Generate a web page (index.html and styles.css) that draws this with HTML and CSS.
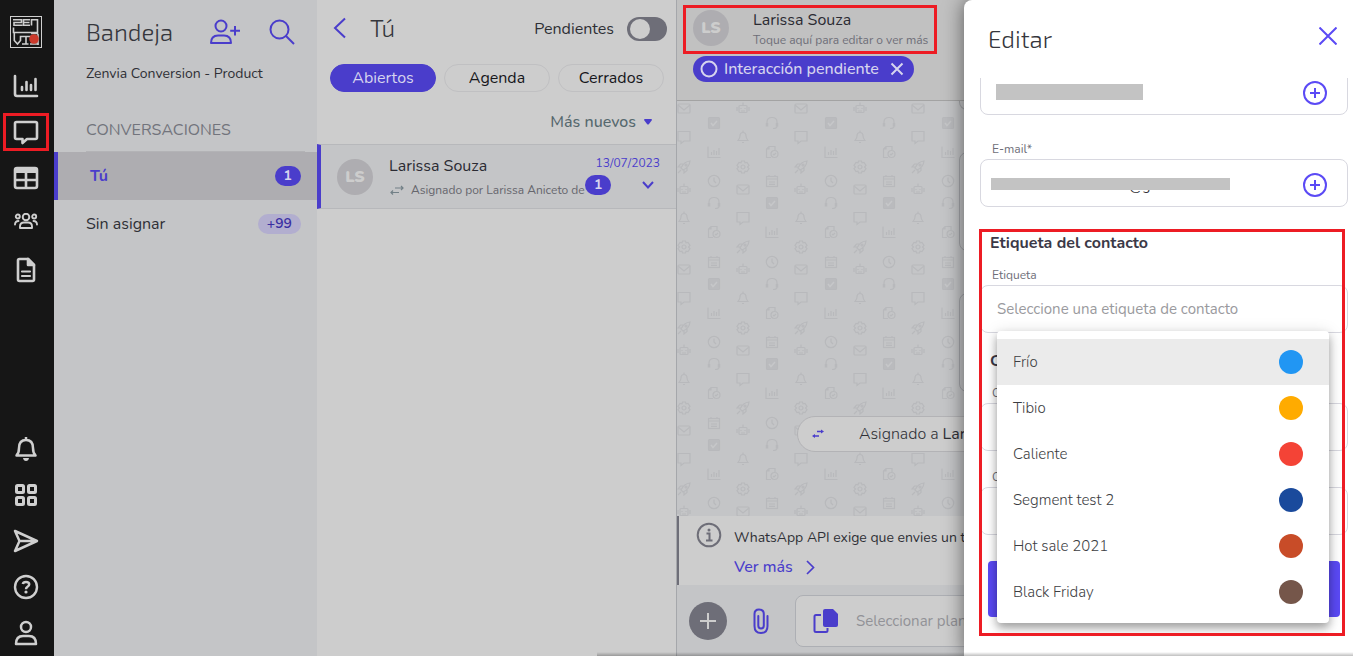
FILE: index.html
```html
<!DOCTYPE html>
<html lang="es">
<head>
    <meta charset="UTF-8">
    <meta name="viewport" content="width=device-width, initial-scale=1.0">
    <title>Bandeja</title>
    <link rel="stylesheet" href="styles.css">
</head>
<body>

<div class="app">
    <!-- Main navigation -->
    <nav class="rail">
        <a class="logo" href="#" aria-label="Zenvia">
            <svg width="32" height="32" viewBox="0 0 32 32" fill="none" stroke="#cfcfcf" stroke-width="1.6">
                <rect x=".5" y=".5" width="31" height="31" stroke-width="1"/>
                <path d="M3 3.8H11.5V6.5H4V9.2H12.5M20 3.8H13.5V9.2H20M14 6.5H19.5M21.5 9.5V3.8H27.5V17.5H21M28 18V29"/>
                <path d="M3.500 11.500V16.500H27M4.300 17V24.500L7.500 28L10.500 24.500V20.500H21M12 28H18.500M16 21V28M20 28H28.500M10.500 20V24"/>
                <circle cx="24" cy="23" r="4.800" fill="#cb3a2c" stroke="none"/>
            </svg>
        </a>
        <a class="rail-item" href="#" aria-label="Informes">
            <svg width="26" height="24" viewBox="0 0 26 24" fill="none" stroke="#cfcfcf" stroke-width="2.6" stroke-linecap="round"><path d="M2 2V20Q2 22 4 22H24M9 13V16M13.5 8V16M18 11V16M22.5 5V16"/></svg>
        </a>
        <a class="rail-item" href="#" aria-label="Conversaciones">
            <span class="rail-highlight">
                <svg width="26" height="26" viewBox="0 0 26 26" fill="none" stroke="#cfcfcf" stroke-width="2.6" stroke-linejoin="round"><path d="M3.5 3H22.5Q24 3 24 4.500V18.500Q24 20 22.500 20H14L9.500 24V20H3.500Q2 20 2 18.500V4.500Q2 3 3.500 3Z"/></svg>
            </span>
        </a>
        <a class="rail-item" href="#" aria-label="Tablas">
            <svg width="26" height="24" viewBox="0 0 26 24" fill="none" stroke="#cfcfcf" stroke-width="2.6"><rect x="2" y="2" width="22" height="20" rx="2"/><path d="M2 4.500H24" stroke-width="5"/><path d="M2 14H24M13 5V22"/></svg>
        </a>
        <a class="rail-item" href="#" aria-label="Contactos">
            <svg width="24" height="22" viewBox="0 0 24 22" fill="none" stroke="#cfcfcf" stroke-width="1.900" stroke-linecap="round" stroke-linejoin="round"><circle cx="12" cy="4" r="3.300"/><circle cx="3.800" cy="3.500" r="2"/><circle cx="20.200" cy="3.500" r="2"/><path d="M6 15V13.500Q6 9.500 10 9.500H14Q18 9.500 18 13.500V15ZM1 11.500Q1 8 4.500 8M23 11.500Q23 8 19.500 8"/></svg>
        </a>
        <a class="rail-item" href="#" aria-label="Documentos">
            <svg width="20" height="26" viewBox="0 0 20 26" fill="none" stroke="#cfcfcf" stroke-width="2.600" stroke-linejoin="round"><path d="M3.500 2H12L18 8V22.500Q18 24 16.500 24H3.500Q2 24 2 22.500V3.500Q2 2 3.500 2Z"/><path d="M12 2V8H18Z" fill="#cfcfcf"/><path d="M6 14.500H14M6 19H14" stroke-linecap="round" stroke-width="2.200"/></svg>
        </a>
        <span class="rail-space"></span>
        <a class="rail-item" href="#" aria-label="Notificaciones">
            <svg width="24" height="26" viewBox="0 0 24 26" fill="none" stroke="#cfcfcf" stroke-width="2.500" stroke-linejoin="round"><path d="M2.500 19.500Q5 17 5 12Q5 4 12 4Q19 4 19 12Q19 17 21.500 19.500ZM12 1V4"/><path d="M9 22H15Q14.500 25 12 25Q9.500 25 9 22Z" fill="#cfcfcf" stroke="none"/></svg>
        </a>
        <a class="rail-item" href="#" aria-label="Aplicaciones">
            <svg width="24" height="24" viewBox="0 0 24 24" fill="none" stroke="#cfcfcf" stroke-width="3"><rect x="2.500" y="2.500" width="7" height="7" rx="1"/><rect x="14.500" y="2.500" width="7" height="7" rx="1"/><rect x="2.500" y="14.500" width="7" height="7" rx="1"/><rect x="14.500" y="14.500" width="7" height="7" rx="1"/></svg>
        </a>
        <a class="rail-item" href="#" aria-label="Enviar">
            <svg width="26" height="24" viewBox="0 0 26 24" fill="none" stroke="#cfcfcf" stroke-width="2.500" stroke-linejoin="round"><path d="M2 2L24 12L2 22L6.500 12ZM6.500 12H23"/></svg>
        </a>
        <a class="rail-item" href="#" aria-label="Ayuda">
            <svg width="26" height="26" viewBox="0 0 26 26" fill="none" stroke="#cfcfcf" stroke-width="2.400"><circle cx="13" cy="13" r="11"/><path d="M9.800 10Q10.200 8 13 8Q16.200 8 16.200 10.300Q16.200 12 14.400 12.800Q13 13.500 13 15.200" stroke-width="2.500"/><circle cx="13" cy="18" r="1.600" fill="#cfcfcf" stroke="none"/></svg>
        </a>
        <a class="rail-item" href="#" aria-label="Perfil">
            <svg width="24" height="26" viewBox="0 0 24 26" fill="none" stroke="#cfcfcf" stroke-width="2.500" stroke-linejoin="round"><circle cx="12" cy="7" r="5"/><path d="M2 24Q2 16 9 16H15Q22 16 22 24Z"/></svg>
        </a>
    </nav>

    <!-- Inbox -->
    <aside class="inbox">
        <header class="inbox-header">
            <h1 class="title">Bandeja</h1>
            <button class="icon-button" aria-label="Agregar contacto">
                <svg width="32" height="26" viewBox="0 0 32 26" fill="none" stroke="#4a3dcb" stroke-width="2" stroke-linejoin="round"><circle cx="12" cy="7" r="5.500"/><path d="M2 24Q2 16.500 9 16.500H15Q22 16.500 22 24ZM26 7V16.500M21.200 11.800H31"/></svg>
            </button>
            <button class="icon-button" aria-label="Buscar">
                <svg width="26" height="26" viewBox="0 0 26 26" fill="none" stroke="#4a3dcb" stroke-width="2"><circle cx="10.500" cy="10.500" r="9"/><path d="M17 17L25 25"/></svg>
            </button>
        </header>
        <p class="account">Zenvia Conversion - Product</p>
        <h2 class="group-title">CONVERSACIONES</h2>
        <a class="queue queue-active" href="#">Tú <span class="badge">1</span></a>
        <a class="queue" href="#">Sin asignar <span class="badge badge-soft">+99</span></a>
    </aside>

    <!-- Conversation list -->
    <section class="list">
        <header class="list-header">
            <button class="icon-button" aria-label="Volver">
                <svg width="14" height="22" viewBox="0 0 14 22" fill="none" stroke="#4a3dcb" stroke-width="2"><path d="M12 1.500L2 11L12 20.500"/></svg>
            </button>
            <h2 class="title">Tú</h2>
            <label class="toggle">Pendientes <input type="checkbox" class="switch"></label>
        </header>
        <div class="tabs">
            <button class="tab tab-active">Abiertos</button>
            <button class="tab">Agenda</button>
            <button class="tab">Cerrados</button>
        </div>
        <button class="sort">Más nuevos
            <svg width="8" height="6" viewBox="0 0 8 6" fill="#4a3dcb"><path d="M0 1Q0 0 1 0H7Q8 0 8 1L5 5Q4 6 3 5Z"/></svg>
        </button>
        <article class="conversation">
            <span class="avatar">LS</span>
            <div class="conversation-text">
                <h3 class="name">Larissa Souza</h3>
                <p class="assigned">
                    <svg width="14" height="10" viewBox="0 0 14 10" fill="none" stroke="#728087" stroke-width="1.200"><path d="M5 3H13M11 1L13 3L11 5M9 7.500H1M3 5.500L1 7.500L3 9.500"/></svg>
                    <span>Asignado por Larissa Aniceto de</span>
                </p>
            </div>
            <div class="conversation-side">
                <time class="date">13/07/2023</time>
                <div class="side-row">
                    <span class="badge">1</span>
                    <button class="icon-button" aria-label="Opciones">
                        <svg width="12" height="8" viewBox="0 0 12 8" fill="none" stroke="#4a3dcb" stroke-width="2"><path d="M1 1L6 6.500L11 1"/></svg>
                    </button>
                </div>
            </div>
        </article>
    </section>

    <!-- Chat -->
    <main class="chat">
        <header class="chat-header">
            <button class="contact">
                <span class="avatar">LS</span>
                <span class="contact-text">
                    <span class="name">Larissa Souza</span>
                    <span class="hint">Toque aquí para editar o ver más</span>
                </span>
            </button>
            <button class="chip">
                <svg width="18" height="18" viewBox="0 0 18 18" fill="none" stroke="#d6d4ee" stroke-width="2"><circle cx="9" cy="9" r="7.500"/></svg>
                <span class="chip-text">Interacción pendiente</span>
                <svg width="14" height="14" viewBox="0 0 14 14" fill="none" stroke="#d6d4ee" stroke-width="2"><path d="M1.500 1.500L12.500 12.500M12.500 1.500L1.500 12.500"/></svg>
            </button>
        </header>
        <div class="messages">
            <svg class="wallpaper" aria-hidden="true">
                <defs>
                    <g id="mail"><rect x="-6" y="-4" width="12" height="9" rx="1"/><path d="M-6 -3L0 2L6 -3"/></g>
                    <g id="talk"><path d="M-6 -5.500H6V4H0L-3 6.500V4H-6Z"/></g>
                    <g id="rocket"><path d="M-3 1Q0 -5.500 6 -6Q5.500 0 -1 3ZM-3 0L-6 0L-3.500 -3L-1 -3M0 3V6L3 3.500V1M-3 3L-6 6"/><circle cx="2" cy="-2" r="1"/></g>
                    <g id="robot"><rect x="-4" y="-2.500" width="8" height="7" rx="1"/><path d="M0 -5.500V-2.500M-6 -1V3M6 -1V3M-2 3H2M-2 0V1M2 0V1"/></g>
                    <g id="bell"><path d="M-5 3.500Q-3 1 -3 -1Q-3 -4.500 0 -4.500Q3 -4.500 3 -1Q3 1 5 3.500ZM0 -6.500V-4.500M-1 5.500H1"/></g>
                    <g id="gear"><path d="M-1.500 -6H1.500L2 -4.200L4 -4.500L6 -1.500L4.500 0L6 1.500L4 4.500L2 4.200L1.500 6H-1.500L-2 4.200L-4 4.500L-6 1.500L-4.500 0L-6 -1.500L-4 -4.500L-2 -4.200Z"/><circle r="2"/></g>
                    <g id="check"><rect x="-5.500" y="-5.500" width="11" height="11" rx="1" fill="#b7b8bb"/><path d="M-3 0L-1 2.500L3 -2" stroke="#c7c8ca" stroke-width="1.500"/></g>
                    <g id="chart"><path d="M-6 -5.500V5.500H6.500M-2.500 0V3M0 -2V3M2.500 -1V3M5 -4V3"/></g>
                    <g id="clock"><circle r="5.700"/><path d="M0 -3.500V0L2 2"/></g>
                    <g id="headset"><path d="M-5 1V-1Q-5 -5.500 0 -5.500Q5 -5.500 5 -1V3Q5 5.500 1 5.500"/><path d="M-5 0V3.500M5 0V3.500" stroke-width="2.500"/></g>
                    <g id="file"><path d="M-1 5.500H-5.500V-3L-3 -5.500H3V-2M-3 -5.500V-3H-5.500"/><circle cx="2.500" cy="2" r="3.500"/><path d="M1 2L2 3L4 1"/></g>
                    <g id="calendar"><rect x="-5.500" y="-4.500" width="11" height="10"/><path d="M-5.500 -2H5.500M-3 -6V-4M3 -6V-4M-3 1H3M-3 3.300H3"/></g>
                    <pattern id="icons" y="-8" width="117" height="161" viewBox="0 -8 117 161" patternUnits="userSpaceOnUse">
                        <g class="wallpaper-icons">
                            <use href="#mail" x="7" y="7"/><use href="#talk" x="7" y="36"/><use href="#rocket" x="7" y="66"/><use href="#robot" x="7" y="88"/><use href="#bell" x="7" y="117"/><use href="#gear" x="7" y="146"/>
                            <use href="#calendar" x="37" y="0"/><use href="#check" x="37" y="22"/><use href="#chart" x="37" y="51"/><use href="#clock" x="37" y="80"/><use href="#headset" x="37" y="102"/><use href="#file" x="37" y="131"/>
                            <use href="#robot" x="66" y="7"/><use href="#bell" x="66" y="36"/><use href="#gear" x="66" y="66"/><use href="#mail" x="66" y="88"/><use href="#talk" x="66" y="117"/><use href="#rocket" x="66" y="146"/>
                            <use href="#clock" x="95" y="0"/><use href="#headset" x="95" y="22"/><use href="#file" x="95" y="51"/><use href="#calendar" x="95" y="80"/><use href="#check" x="95" y="102"/><use href="#chart" x="95" y="131"/>
                        </g>
                    </pattern>
                </defs>
                <!-- first row is drawn on its own so that no half icons show under the header -->
                <g class="wallpaper-icons">
                    <use href="#mail" x="7" y="7"/><use href="#robot" x="66" y="7"/><use href="#mail" x="124" y="7"/><use href="#robot" x="183" y="7"/><use href="#mail" x="241" y="7"/>
                </g>
                <rect y="14" width="100%" height="100%" fill="url(#icons)"/>
            </svg>
            <div class="bubble bubble-cut"></div>
            <div class="bubble"></div>
            <div class="bubble"></div>
            <div class="event">
                <svg width="14" height="10" viewBox="0 0 14 10" fill="#4a3dcb" stroke="#4a3dcb" stroke-width="1.500"><path d="M6 2.500H11M3 7H8"/><path d="M10 .500L13 2.500L10 4.500ZM4 5L1 7L4 9Z" stroke="none"/></svg>
                <span>Asignado a <b>Larissa</b></span>
            </div>
        </div>
        <div class="notice">
            <svg width="26" height="26" viewBox="0 0 26 26" fill="none" stroke="#6e6e78" stroke-width="2"><circle cx="13" cy="13" r="11.300"/><path d="M10.500 11.500H13.500V18M10 18.500H16.500"/><circle cx="13" cy="8" r="1.500" fill="#6e6e78" stroke="none"/></svg>
            <div class="notice-text">
                <p>WhatsApp API exige que envies un template</p>
                <a class="more" href="#">Ver más
                    <svg width="9" height="15" viewBox="0 0 9 15" fill="none" stroke="#4a3dcb" stroke-width="1.700"><path d="M1 1L7.500 7.500L1 14"/></svg>
                </a>
            </div>
        </div>
        <footer class="composer">
            <button class="add" aria-label="Agregar">
                <svg width="16" height="16" viewBox="0 0 16 16" stroke="#cdcdcd" stroke-width="2"><path d="M8 0V16M0 8H16"/></svg>
            </button>
            <button class="icon-button" aria-label="Adjuntar">
                <svg width="16" height="26" viewBox="0 0 16 26" fill="none" stroke="#4a3dcb" stroke-width="2" stroke-linecap="round"><path d="M14.500 8V18Q14.500 25 8 25Q1.500 25 1.500 18V6Q1.500 1.500 6 1.500Q10.800 1.500 10.800 6V17.500Q10.800 20.500 8 20.500Q5.300 20.500 5.300 17.500V8"/></svg>
            </button>
            <label class="template">
                <svg width="26" height="26" viewBox="0 0 26 26" fill="none" stroke="#4a3dcb" stroke-width="2"><path d="M8 7H3Q1.500 7 1.500 8.500V22.500Q1.500 24 3 24H13Q14.500 24 14.500 22.500V20"/><path d="M12 1H20L25 6V17Q25 19 23 19H12Q10 19 10 17V3Q10 1 12 1Z" fill="#4a3dcb" stroke="none"/></svg>
                <input type="text" class="template-input" placeholder="Seleccionar plantilla" aria-label="Plantilla">
            </label>
        </footer>
    </main>
    <div class="bottom-shade"></div>

    <!-- Edit contact -->
    <section class="drawer">
        <header class="drawer-header">
            <h2 class="title drawer-title">Editar</h2>
            <button class="icon-button" aria-label="Cerrar">
                <svg width="18" height="18" viewBox="0 0 18 18" fill="none" stroke="#5b4af5" stroke-width="2"><path d="M.500 .500L17.500 17.500M17.500 .500L.500 17.500"/></svg>
            </button>
        </header>
        <form class="drawer-body">
            <div class="field field-first">
                <input type="tel" class="control" aria-label="Teléfono">
                <span class="redacted redacted-phone"></span>
                <button type="button" class="icon-button field-add" aria-label="Agregar teléfono">
                    <svg width="24" height="24" viewBox="0 0 24 24" fill="none" stroke="#5b4af5" stroke-width="2"><circle cx="12" cy="12" r="11"/><path d="M12 7V17M7 12H17"/></svg>
                </button>
            </div>
            <label class="label" for="email">E-mail*</label>
            <div class="field">
                <input type="text" class="control control-email" id="email" value="@g">
                <span class="redacted redacted-email"></span>
                <button type="button" class="icon-button field-add" aria-label="Agregar e-mail">
                    <svg width="24" height="24" viewBox="0 0 24 24" fill="none" stroke="#5b4af5" stroke-width="2"><circle cx="12" cy="12" r="11"/><path d="M12 7V17M7 12H17"/></svg>
                </button>
            </div>
            <div class="tag-area">
                <h3 class="section-title">Etiqueta del contacto</h3>
                <label class="label" for="tag">Etiqueta</label>
                <div class="field">
                    <select class="control control-tag" id="tag">
                        <option>Seleccione una etiqueta de contacto</option>
                    </select>
                    <ul class="menu" role="listbox">
                        <li class="menu-item menu-item-active" role="option">Frío <span class="dot dot-cold"></span></li>
                        <li class="menu-item" role="option">Tibio <span class="dot dot-warm"></span></li>
                        <li class="menu-item" role="option">Caliente <span class="dot dot-hot"></span></li>
                        <li class="menu-item" role="option">Segment test 2 <span class="dot dot-segment"></span></li>
                        <li class="menu-item" role="option">Hot sale 2021 <span class="dot dot-sale"></span></li>
                        <li class="menu-item" role="option">Black Friday <span class="dot dot-friday"></span></li>
                    </ul>
                </div>
                <h3 class="section-title">C</h3>
                <label class="label" for="field1">C</label>
                <div class="field"><input type="text" class="control" id="field1"></div>
                <label class="label" for="field2">C</label>
                <div class="field"><input type="text" class="control" id="field2"></div>
                <button type="button" class="save" aria-label="Guardar"></button>
            </div>
        </form>
    </section>
</div>

</body>
</html>
```
FILE: styles.css
```css
*, *::before, *::after { box-sizing: border-box; }
body { margin: 0; font-family: Nunito, Lato, sans-serif; font-size: 16px; line-height: 20px; color: #2f3036; }
h1, h2, h3, p, ul { margin: 0; padding: 0; }
a { color: inherit; text-decoration: none; }
button { padding: 0; border: none; background: none; font: inherit; color: inherit; cursor: pointer; }
input, select { font: inherit; color: inherit; }
svg { display: block; flex: none; }

.app { position: relative; display: flex; height: 100vh; overflow: hidden; }
.title { font-family: "Exo 2", "Open Sans", sans-serif; font-size: 24px; font-weight: 300; line-height: 32px; color: #35363c; }
.icon-button { display: flex; align-items: center; justify-content: center; flex: none; }
.name { font-size: 16px; font-weight: 400; line-height: 20px; color: #2b2b33; }
.avatar { display: flex; align-items: center; justify-content: center; flex: none; width: 36px; height: 36px; border-radius: 50%; background: #aeadb1; color: #cdcdcd; font-weight: 900; }
.badge { display: flex; align-items: center; justify-content: center; min-width: 26px; height: 20px; padding: 0 9px; border-radius: 10px; background: #4a3dcb; color: #d6d4ee; font-size: 14px; font-weight: 700; }
.badge-soft { background: #b2aecf; color: #3a2fa3; font-weight: 600; }

/* navigation */
.rail { display: flex; flex-direction: column; align-items: center; flex: none; width: 54px; padding: 16px 2px 0 0; background: #161616; }
.logo { margin-bottom: 15px; }
.rail-item { display: flex; align-items: center; justify-content: center; flex: none; width: 46px; height: 46px; }
.rail-highlight { display: flex; align-items: center; justify-content: center; width: 46px; height: 38px; border: 3px solid #ed1c24; }
.rail-space { flex: 1; }

/* inbox */
.inbox { flex: none; width: 263px; background: #c4c5c7; }
.inbox-header { display: flex; align-items: center; gap: 28px; padding: 16px 22px 0 32px; }
.inbox-header .title { flex: 1; }
.account { padding: 16px 16px 0 32px; font-size: 14px; }
.group-title { margin: 36px 12px 0 32px; padding-bottom: 11px; border-bottom: 1px solid #b3b3b6; color: #72747c; font-size: 16px; font-weight: 400; }
.queue { display: flex; align-items: center; justify-content: space-between; height: 48px; padding: 0 16px 0 32px; }
.queue-active { border-left: 4px solid #4a3dcb; background: #aeadb1; color: #4a3dcb; font-weight: 700; }

/* conversation list */
.list { flex: none; width: 359px; background: #cdcdcd; }
.list-header { display: flex; align-items: center; gap: 23px; padding: 12px 9px 0 16px; }
.toggle { display: flex; align-items: center; gap: 13px; margin: 2px 0 0 auto; }
.switch { appearance: none; width: 40px; height: 24px; margin: 0; padding: 2px 3px; border-radius: 12px; background: #6e6e78; }
.switch::before { content: ""; display: block; width: 20px; height: 20px; border-radius: 50%; background: #cdcdcd; }
.tabs { display: flex; gap: 8px; padding: 20px 12px 0 13px; }
.tab { flex: 1; height: 28px; border: 1px solid #c0c0c2; border-radius: 14px; color: #17171b; }
.tab-active { border-color: #4a3dcb; background: #4a3dcb; color: #d6d4ee; }
.sort { display: flex; align-items: center; gap: 8px; margin: 20px 24px 12px auto; color: #56686e; font-weight: 500; }
.conversation { display: flex; align-items: center; height: 65px; padding: 0 16px; border: solid #b7b8bb; border-width: 1px 0; border-left: 4px solid #4a3dcb; background: #c4c5c7; }
.conversation-text { flex: 1; min-width: 0; padding: 2px 0 0 16px; }
.assigned { display: flex; align-items: center; gap: 7px; padding: 4px 0 0 1px; color: #66666d; font-size: 12px; white-space: nowrap; }
.conversation-side { width: 75px; padding-bottom: 4px; }
.date { display: block; color: #4a3dcb; font-size: 12px; line-height: 16px; text-align: right; }
.side-row { display: flex; align-items: center; justify-content: space-between; padding: 4px 6px 0 0; }

/* chat */
.chat { display: flex; flex-direction: column; flex: 1; min-width: 0; border-left: 1px solid #a5a7ab; background: #c4c5c7; }
.chat-header { flex: none; padding: 5px 6px 18px; border-bottom: 1px solid #a3a3a3; background: #c1c1c1; }
.contact { display: flex; gap: 24px; padding: 2px 6px 0 7px; border: 3px solid #ed1c24; text-align: left; }
.contact-text { display: flex; flex-direction: column; padding-bottom: 1px; }
.hint { color: #6e6e78; font-size: 12px; }
.chip { display: flex; align-items: center; gap: 6px; height: 26px; margin: 2px 0 0 10px; padding: 0 10px 0 7px; border-radius: 13px; background: #4a3dcb; color: #d6d4ee; font-weight: 500; }
.chip-text { padding-right: 5px; }
.messages { position: relative; display: flex; flex-direction: column; align-items: flex-end; flex: 1; min-height: 0; overflow: hidden; padding: 0 16px; }
.wallpaper { position: absolute; top: 0; left: 0; width: 100%; height: 100%; opacity: 0.7; }
.wallpaper-icons { fill: none; stroke: #b4b5b8; stroke-width: 1.2; }
.bubble { position: relative; flex: none; width: 378px; height: 99px; margin-bottom: 42px; border: 1px solid #a3a5a9; border-radius: 8px; background: #c4c5c7; }
.bubble-cut { height: 9px; border-top: none; border-radius: 0 0 8px 8px; }
.event { position: relative; display: flex; align-items: center; align-self: center; gap: 34px; width: 436px; height: 36px; margin-top: -18px; padding: 0 13px; border: 1px solid #b3b3b6; border-radius: 18px; background: #cdcdcd; font-weight: 300; }
.event b { font-weight: 400; }
.notice { display: flex; flex: none; gap: 12px; height: 69px; padding: 6px 17px; border-left: 2px solid #6e6e78; background: #cdcdcd; font-size: 14px; white-space: nowrap; }
.notice-text { padding-top: 6px; }
.more { display: flex; align-items: center; gap: 13px; padding-top: 9px; color: #4a3dcb; font-size: 16px; font-weight: 500; }
.composer { display: flex; align-items: center; flex: none; gap: 26px; height: 71px; padding: 0 16px 0 12px; }
.add { display: flex; align-items: center; justify-content: center; width: 38px; height: 38px; border-radius: 50%; background: #6e6e78; }
.template { display: flex; align-items: center; flex: 1; gap: 15px; height: 52px; padding: 0 17px; border: 1px solid #adafb4; border-radius: 8px; background: #cdcdcd; }
.template-input { flex: 1; min-width: 0; border: none; background: none; font-size: 15px; }
.template-input::placeholder { color: #929297; }
.bottom-shade { position: absolute; right: 0; bottom: 0; z-index: 3; width: 756px; height: 4px; background: linear-gradient(transparent, rgba(0, 0, 0, 0.25)); }

/* drawer */
.drawer { position: absolute; top: 0; right: 0; bottom: 0; z-index: 2; display: flex; flex-direction: column; width: 389px; border-radius: 8px 0 0 0; background: #fff; box-shadow: 0 0 20px rgba(0, 0, 0, 0.55); }
.drawer-header { display: flex; justify-content: space-between; align-items: center; flex: none; height: 78px; padding: 0 16px 6px 24px; }
.drawer-title { padding-top: 6px; }
.drawer-body { flex: 1; min-height: 0; overflow: hidden; padding: 0 5px 0 16px; }
.field { position: relative; }
.field-first { margin-top: -11px; }
.control { display: block; width: 100%; height: 48px; padding: 0 16px; border: 1px solid #d8d8e0; border-radius: 8px; background: #fff; }
.control-email { padding: 4px 16px 0 148px; font-size: 14px; }
.control-tag { appearance: none; color: #9a9a9e; font-size: 15px; }
.field-add { position: absolute; top: 14px; right: 21px; }
.redacted { position: absolute; background: #c3c3c3; }
.redacted-phone { top: 17px; left: 16px; width: 147px; height: 16px; }
.redacted-email { top: 19px; left: 11px; width: 239px; height: 12px; }
.label { display: block; padding: 26px 12px 2px; color: #6e6e78; font-size: 12px; line-height: 16px; }
.section-title { padding: 18px 10px 0; color: #3b3947; font-size: 16px; font-weight: 700; }
.tag-area { position: relative; margin: 8px 0 0; }
.tag-area .label { padding-top: 18px; }
.tag-area .section-title + .label { padding-top: 14px; }
.tag-area::after { content: ""; position: absolute; top: 14px; left: -1px; right: 3px; height: 407px; border: 3px solid #ed1c24; pointer-events: none; z-index: 2; }
.menu { position: absolute; top: 46px; left: 17px; right: 19px; z-index: 1; padding: 8px 0; border-radius: 4px; background: #fff; box-shadow: 0 5px 8px rgba(0, 0, 0, 0.3), 0 2px 16px rgba(0, 0, 0, 0.15); list-style: none; }
.menu-item { display: flex; align-items: center; justify-content: space-between; height: 46px; padding: 0 26px 0 16px; color: #3c3d42; font-size: 15px; font-weight: 300; }
.menu-item-active { background: #ebebeb; }
.dot { width: 24px; height: 24px; border-radius: 50%; }
.dot-cold { background: #2196f3; }
.dot-warm { background: #ffab00; }
.dot-hot { background: #f44336; }
.dot-segment { background: #1a4a9c; }
.dot-sale { background: #c84c28; }
.dot-friday { background: #75564a; }
.save { display: block; width: calc(100% - 16px); height: 56px; margin: 26px 8px 0; border-radius: 4px; background: #5b4af5; }
```
